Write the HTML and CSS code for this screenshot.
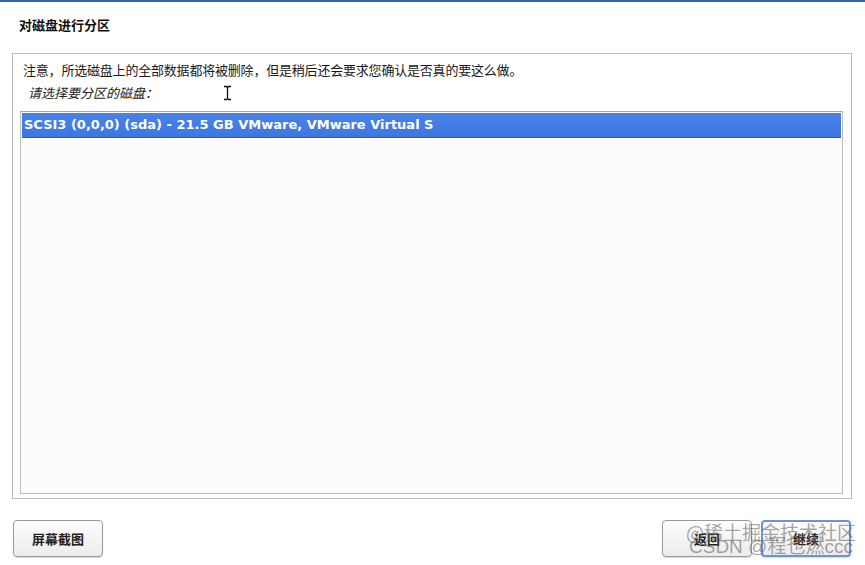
FILE: index.html
```html
<!DOCTYPE html>
<html lang="zh-CN">
<head>
<meta charset="utf-8">
<title>对磁盘进行分区</title>
<link rel="stylesheet" href="styles.css">
</head>
<body>
<div class="topbar"></div>
<h1 class="title">对磁盘进行分区</h1>
<div class="frame">
  <p class="note">注意，所选磁盘上的全部数据都将被删除，但是稍后还会要求您确认是否真的要这么做。</p>
  <p class="prompt">请选择要分区的磁盘：</p>
  <div class="list">
    <div class="row selected">SCSI3 (0,0,0) (sda) - 21.5 GB VMware, VMware Virtual S</div>
  </div>
</div>
<div class="footer">
  <button class="btn">屏幕截图</button>
  <div class="spacer"></div>
  <button class="btn">返回</button>
  <button class="btn focused">继续</button>
</div>
<svg class="cursor" width="9" height="16" viewBox="0 0 9 16"><path d="M1 1.5h2.5l1 1 1-1H8M4.5 2.5v11M1 14.5h2.5l1-1 1 1H8" fill="none" stroke="#111" stroke-width="1.3"/></svg>
<div class="watermark">
  <span class="wm1">@稀土掘金技术社区</span>
  <span class="wm2">CSDN @程也燃ccc</span>
</div>
</body>
</html>
```
FILE: styles.css
```css
html, body {
  margin: 0;
  padding: 0;
  background: #ffffff;
  width: 865px;
  height: 565px;
  overflow: hidden;
  position: relative;
  font-family: "DejaVu Sans", "Noto Sans CJK SC", sans-serif;
  color: #1a1a1a;
}

.topbar {
  height: 2px;
  background: #2f62b8;
}

.title {
  margin: 0;
  padding: 14px 0 0 19px;
  font-size: 13px;
  line-height: 18px;
  font-weight: bold;
  font-family: "Noto Sans CJK SC", sans-serif;
  color: #111;
}

.frame {
  margin: 19px 13px 0 12px;
  height: 444px;
  border: 1px solid #b9b9b9;
  display: flex;
  flex-direction: column;
  box-sizing: content-box;
}

.note {
  margin: 0;
  padding: 7px 0 0 10px;
  font-size: 13px;
  letter-spacing: -0.2px;
  line-height: 18px;
  font-family: "Noto Sans CJK SC", sans-serif;
  color: #1a1a1a;
}

.prompt {
  margin: 5px 0 0 15px;
  font-size: 13px;
  line-height: 18px;
  font-style: italic;
  font-family: "Noto Sans CJK SC", sans-serif;
  color: #222;
}

.list {
  flex: 1;
  margin: 9px 8px 4px 7px;
  border: 1px solid #bdbdbd;
  border-top-color: #a9a9a9;
  background: #fdfbfd;
  padding: 1px;
}

.row {
  height: 25px;
  line-height: 25px;
  padding-left: 2px;
  font-size: 13px;
  font-weight: bold;
  white-space: nowrap;
  overflow: hidden;
}

.row.selected {
  background: linear-gradient(#4a82e6, #3c76e0);
  border-bottom: 1px solid #2c5fb8;
  height: 24px;
  line-height: 24px;
  color: #ffffff;
}

.footer {
  display: flex;
  align-items: flex-start;
  gap: 9px;
  margin: 21px 14px 0 13px;
}

.spacer {
  flex: 1;
}

.btn {
  width: 90px;
  height: 37px;
  border: 1px solid #9a9a9a;
  border-radius: 4px;
  background: linear-gradient(#fdfdfd, #ececec);
  box-shadow: 0 1px 1px rgba(0,0,0,0.15);
  font-family: "Noto Sans CJK SC", sans-serif;
  font-size: 13px;
  font-weight: bold;
  color: #222;
  padding: 0;
}

.btn.focused {
  border: 2px solid #6b93d8;
}

.cursor {
  position: absolute;
  left: 223px;
  top: 85px;
}

.watermark {
  position: absolute;
  left: 686px;
  top: 521px;
  width: 170px;
  pointer-events: none;
  font-family: "Noto Sans CJK SC", sans-serif;
  color: rgba(90, 90, 90, 0.55);
}

.wm1 {
  position: absolute;
  left: 0;
  top: 0;
  font-size: 19px;
  line-height: 22px;
  white-space: nowrap;
}

.wm2 {
  position: absolute;
  left: 3px;
  top: 15px;
  font-size: 19px;
  line-height: 22px;
  white-space: nowrap;
  font-family: "Liberation Sans", "Noto Sans CJK SC", sans-serif;
}
```
